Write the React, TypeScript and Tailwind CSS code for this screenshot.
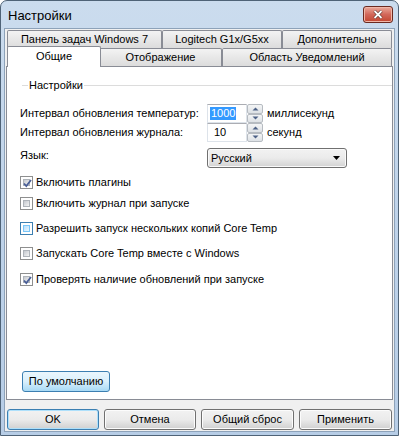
import React from "react";

const font = { fontFamily: '"Liberation Sans", Arial, sans-serif' };

function CheckBox({ checked, hover }: { checked?: boolean; hover?: boolean }) {
  return (
    <div
      className={
        "w-[13px] h-[13px] border p-[2px] bg-white shrink-0 " +
        (hover ? "border-[#3c7fb1]" : "border-[#8e8f8f]")
      }
    >
      <div
        className={
          "relative w-full h-full border " +
          (hover
            ? "border-[#79c6f9] bg-gradient-to-br from-[#b9dffb] to-[#e8f6fe]"
            : "border-[#aeb3b9] bg-gradient-to-br from-[#c4c8ce] to-[#f4f4f4]")
        }
      >
        {checked && (
          <svg className="absolute -left-[2px] -top-[2px]" width="11" height="11" viewBox="0 0 11 11">
            <path d="M2 5.5 L4.3 8 L9 2" fill="none" stroke="#4a5f97" strokeWidth="1.8" />
          </svg>
        )}
      </div>
    </div>
  );
}

function Check({ label, checked, hover, mt }: { label: string; checked?: boolean; hover?: boolean; mt: string }) {
  return (
    <div className={"flex items-center h-[13px] gap-[3px] " + mt}>
      <CheckBox checked={checked} hover={hover} />
      <span>{label}</span>
    </div>
  );
}

function SpinButtons() {
  return (
    <div className="flex flex-col w-[16px] h-full">
      {["up", "down"].map((d) => (
        <div
          key={d}
          className="flex-1 flex items-center justify-center border border-[#b6bbc1] rounded-[2px] bg-gradient-to-b from-[#f4f5f6] to-[#dde1e5]"
        >
          <svg width="7" height="4" viewBox="0 0 7 4">
            {d === "up" ? <path d="M0.5 3.5 L3.5 0.5 L6.5 3.5 Z" fill="#4d6185" /> : <path d="M0.5 0.5 L3.5 3.5 L6.5 0.5 Z" fill="#4d6185" />}
          </svg>
        </div>
      ))}
    </div>
  );
}

function Spin({ value, selected }: { value: string; selected?: boolean }) {
  return (
    <div className="flex h-[19px]">
      <div className="w-[40px] h-full bg-white border border-[#dde3ea] border-t-[#abadb3] flex items-center pl-[2px]">
        {selected ? (
          <span className="bg-[#3399ff] text-white px-[1px] leading-[13px]">{value}</span>
        ) : (
          <span className="pl-[4px]">{value}</span>
        )}
      </div>
      <SpinButtons />
    </div>
  );
}

function Button({ label, w, focus, hover }: { label: string; w: string; focus?: boolean; hover?: boolean }) {
  return (
    <div
      className={
        "h-[21px] rounded-[3px] border flex items-center justify-center " +
        w +
        " " +
        (hover
          ? "border-[#3c7fb1] bg-gradient-to-b from-[#eaf6fd] via-[#d9f0fc] to-[#a7d9f5]"
          : focus
          ? "border-[#3c7fb1] bg-gradient-to-b from-[#f2f2f2] via-[#ebebeb] to-[#d0d0d0] shadow-[inset_0_0_0_1px_#aee0fb]"
          : "border-[#707070] bg-gradient-to-b from-[#f2f2f2] via-[#ebebeb] to-[#d0d0d0] shadow-[inset_0_0_0_1px_#fcfcfc]")
      }
    >
      {label}
    </div>
  );
}

function Tab({ label, w, selected }: { label: string; w: string; selected?: boolean }) {
  return (
    <div
      className={
        "flex items-center justify-center border border-[#898c95] rounded-t-[2px] " +
        w +
        " " +
        (selected
          ? "relative z-10 h-[21px] -mb-[1px] border-b-0 bg-white -mx-[2px] pb-[2px]"
          : "h-[18px] border-b-0 bg-gradient-to-b from-[#f3f3f3] to-[#dcdcdc]")
      }
    >
      {label}
    </div>
  );
}

export default function App() {
  return (
    <div className="w-[399px] h-[436px] bg-white text-[11px] text-black" style={font}>
      <div className="w-full h-full rounded-t-[7px] border border-[#4f6377] bg-gradient-to-b from-[#cbdcee] via-[#bfd3ea] to-[#b7cde6] flex flex-col">
        <div className="h-[27px] flex items-start justify-between pl-[7px] pr-[5px]">
          <span className="text-[13px] mt-[7px] leading-[15px]">Настройки</span>
          <div className="mt-[5px] w-[30px] h-[17px] rounded-[3px] border border-[#6b2a20] bg-gradient-to-b from-[#e9a99b] via-[#d2675a] to-[#c2452f] flex items-center justify-center shadow-[inset_0_0_0_1px_#f1b7a8]">
            <svg width="10" height="9" viewBox="0 0 10 9">
              <path d="M1.5 1 L8.5 8 M8.5 1 L1.5 8" stroke="#3a1410" strokeWidth="3" />
              <path d="M1.5 1 L8.5 8 M8.5 1 L1.5 8" stroke="#ffffff" strokeWidth="2" />
            </svg>
          </div>
        </div>
        <div className="flex-1 mx-[3px] mb-[3px] bg-[#f0f0f0] border border-[#8da2b9] flex flex-col px-[1px] pt-[1px]">
          <div className="flex h-[18px] pl-[1px] pr-[1px]">
            <Tab label="Панель задач Windows 7" w="w-[155px]" />
            <Tab label="Logitech G1x/G5xx" w="w-[120px]" />
            <Tab label="Дополнительно" w="flex-1" />
          </div>
          <div className="flex h-[18px] items-end pl-[3px] pr-[1px]">
            <Tab label="Общие" w="w-[94px]" selected />
            <Tab label="Отображение" w="w-[123px]" />
            <Tab label="Область Уведомлений" w="flex-1" />
          </div>
          <div className="h-[334px] bg-white border border-[#898c95] flex flex-col pl-[13px]">
            <div className="flex items-center h-[13px] mt-[12px] ml-[2px]">
              <div className="w-[6px] h-px bg-[#dcdcdc]" />
              <span className="px-[1px]">Настройки</span>
              <div className="flex-1 h-px bg-[#dcdcdc]" />
            </div>
            <div className="grid grid-cols-[187px_auto_1fr] items-center mt-[12px]">
              <span>Интервал обновления температур:</span>
              <Spin value="1000" selected />
              <span className="pl-[4px]">миллисекунд</span>
              <span>Интервал обновления журнала:</span>
              <Spin value="10" />
              <span className="pl-[4px]">секунд</span>
            </div>
            <div className="flex items-center h-[20px] mt-[6px]">
              <span className="w-[187px] -mt-[5px]">Язык:</span>
              <div className="w-[140px] h-[20px] rounded-[3px] border border-[#707070] bg-gradient-to-b from-[#f2f2f2] via-[#ebebeb] to-[#d3d3d3] flex items-center justify-between pl-[3px] pr-[6px] shadow-[inset_0_0_0_1px_#fafafa]">
                <span>Русский</span>
                <svg width="7" height="4" viewBox="0 0 7 4">
                  <path d="M0 0 L7 0 L3.5 4 Z" fill="#000" />
                </svg>
              </div>
            </div>
            <Check label="Включить плагины" checked mt="mt-[8px]" />
            <Check label="Включить журнал при запуске" mt="mt-[8px]" />
            <Check label="Разрешить запуск нескольких копий Core Temp" hover mt="mt-[12px]" />
            <Check label="Запускать Core Temp вместе с Windows" mt="mt-[12px]" />
            <Check label="Проверять наличие обновлений при запуске" checked mt="mt-[13px]" />
            <div className="mt-auto mb-[7px] ml-[2px]">
              <Button label="По умолчанию" w="w-[88px]" hover />
            </div>
          </div>
          <div className="flex mt-[9px] pl-[1px] gap-[5px]">
            <Button label="OK" w="w-[92px]" focus />
            <Button label="Отмена" w="w-[92px]" />
            <Button label="Общий сброс" w="w-[93px]" />
            <Button label="Применить" w="w-[93px]" />
          </div>
        </div>
      </div>
    </div>
  );
}
